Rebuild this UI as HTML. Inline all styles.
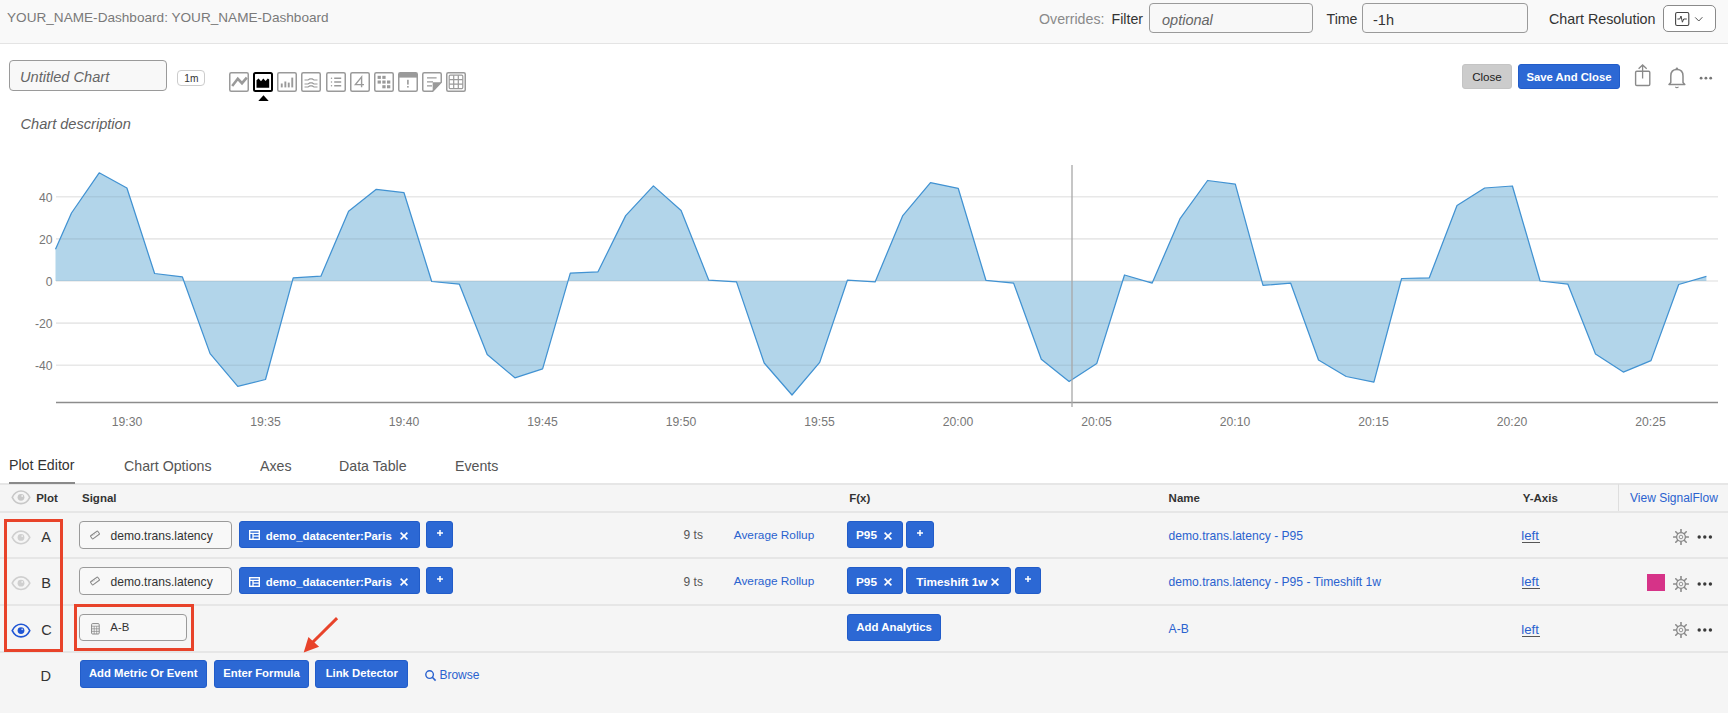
<!DOCTYPE html>
<html><head><meta charset="utf-8">
<style>
*{box-sizing:border-box;margin:0;padding:0}
html,body{width:1728px;height:713px;overflow:hidden;background:#fff;font-family:"Liberation Sans",sans-serif;color:#333;position:relative}
.abs{position:absolute}
.hdr{left:0;top:0;width:1728px;height:44px;background:#f9f9f9;border-bottom:1px solid #e4e4e4}
.t{position:absolute;white-space:nowrap;line-height:1}
.inp{position:absolute;border:1px solid #9a9a9a;border-radius:4px;background:#f8f8f8}
.btn{position:absolute;background:#2c68d4;color:#fff;font-weight:700;border-radius:3px;text-align:center;white-space:nowrap;border:1px solid #215cc9}
.tbl{left:0;top:484px;width:1728px;height:229px;background:#f5f5f5}
.sep{position:absolute;left:0;width:1728px;height:2px;background:#e6e6e6}
.link{color:#2a62cf}
svg text{font-family:"Liberation Sans",sans-serif}
</style></head><body>
<div class="abs hdr"></div>
<div class="t" style="left:7px;top:11px;font-size:13.6px;color:#7a7a7a">YOUR_NAME-Dashboard: YOUR_NAME-Dashboard</div>
<div class="t" style="left:1039px;top:12px;font-size:14.2px;color:#8a8a8a">Overrides:</div>
<div class="t" style="left:1111.5px;top:12px;font-size:14.2px;color:#333">Filter</div>
<div class="inp" style="left:1149px;top:3px;width:164px;height:30px;background:#f8f8f8"></div>
<div class="t" style="left:1162px;top:13px;font-size:14.5px;font-style:italic;color:#666">optional</div>
<div class="t" style="left:1326.5px;top:12px;font-size:14.2px;color:#333">Time</div>
<div class="inp" style="left:1362px;top:3px;width:166px;height:30px"></div>
<div class="t" style="left:1373px;top:13px;font-size:14.5px;color:#333">-1h</div>
<div class="t" style="left:1549px;top:12px;font-size:14.3px;color:#333">Chart Resolution</div>
<div class="inp" style="left:1663px;top:5px;width:53px;height:27px;background:#fff;border-radius:5px;border-color:#8a8a8a"></div>

<div class="inp" style="left:9px;top:60px;width:158px;height:31px"></div>
<div class="t" style="left:20px;top:70px;font-size:14.6px;font-style:italic;color:#666">Untitled Chart</div>
<div class="inp" style="left:177px;top:70px;width:28px;height:16px;border-color:#ccc;background:#fff"></div>
<div class="t" style="left:184.3px;top:74.2px;font-size:10.2px;color:#333">1m</div>

<svg class="abs" style="left:229.2px;top:72.2px" width="20" height="20" viewBox="0 0 20 20"><rect x="0.75" y="0.75" width="18.5" height="18.5" rx="1.5" fill="none" stroke="#9a9a9a" stroke-width="1.5"/><path d="M3.2,14 L8.8,6.8 L13,11.2 L17.8,5.6" fill="none" stroke="#9a9a9a" stroke-width="2.6"/></svg>
<svg class="abs" style="left:253.3px;top:72.2px" width="20" height="20" viewBox="0 0 20 20"><rect x="1" y="1" width="18" height="18" rx="1.5" fill="none" stroke="#000" stroke-width="2"/><path d="M3.5,15.7 V8.2 L5.6,6.6 L8,9.2 L10.3,6.6 L12.6,9 L14.8,6.6 L16.2,7.6 V15.7 Z" fill="#000"/></svg>
<svg class="abs" style="left:277.4px;top:72.2px" width="20" height="20" viewBox="0 0 20 20"><rect x="0.75" y="0.75" width="18.5" height="18.5" rx="1.5" fill="none" stroke="#9a9a9a" stroke-width="1.5"/><rect x="3.8" y="11.5" width="1.9" height="3.9000000000000004" fill="#9a9a9a"/><rect x="7.4" y="9.5" width="1.9" height="5.9" fill="#9a9a9a"/><rect x="10.8" y="10.6" width="1.9" height="4.800000000000001" fill="#9a9a9a"/><rect x="14.3" y="5.6" width="1.9" height="9.8" fill="#9a9a9a"/></svg>
<svg class="abs" style="left:301.4px;top:72.2px" width="20" height="20" viewBox="0 0 20 20"><rect x="0.75" y="0.75" width="18.5" height="18.5" rx="1.5" fill="none" stroke="#9a9a9a" stroke-width="1.5"/><g fill="none" stroke="#9a9a9a" stroke-width="1.2"><path d="M3.5,8 H7 L8.8,6.9 H11.2 L13,8 H16.5"/><path d="M3.5,12 H7 L8.8,10.9 H11.2 L13,12 H16.5"/><path d="M3.5,15 H7 L8.8,13.9 H11.2 L13,15 H16.5"/></g></svg>
<svg class="abs" style="left:325.5px;top:72.2px" width="20" height="20" viewBox="0 0 20 20"><rect x="0.75" y="0.75" width="18.5" height="18.5" rx="1.5" fill="none" stroke="#9a9a9a" stroke-width="1.5"/><g fill="#9a9a9a"><circle cx="5.5" cy="6.3" r="0.75"/><circle cx="5.5" cy="10" r="0.75"/><circle cx="5.5" cy="13.8" r="0.75"/></g><g stroke="#9a9a9a" stroke-width="1.4"><path d="M8.2,6.3 H15.2 M8.2,10 H15.2 M8.2,13.8 H15.2"/></g></svg>
<svg class="abs" style="left:349.6px;top:72.2px" width="20" height="20" viewBox="0 0 20 20"><rect x="0.75" y="0.75" width="18.5" height="18.5" rx="1.5" fill="none" stroke="#9a9a9a" stroke-width="1.5"/><path d="M11.6,15.3 V4.9 L5.4,12.6 H14" fill="none" stroke="#9a9a9a" stroke-width="1.4"/></svg>
<svg class="abs" style="left:373.7px;top:72.2px" width="20" height="20" viewBox="0 0 20 20"><rect x="0.75" y="0.75" width="18.5" height="18.5" rx="1.5" fill="none" stroke="#9a9a9a" stroke-width="1.5"/><rect x="3.6" y="3.8" width="3.3" height="3.1" fill="#9a9a9a"/><rect x="8.3" y="3.8" width="3.3" height="3.1" fill="#9a9a9a"/><rect x="3.6" y="8.5" width="3.3" height="3.1" fill="#9a9a9a"/><rect x="8.3" y="8.5" width="3.3" height="3.1" fill="#9a9a9a"/><rect x="13" y="8.5" width="3.3" height="3.1" fill="#9a9a9a"/><rect x="8.3" y="13.2" width="3.3" height="3.1" fill="#9a9a9a"/><rect x="13" y="13.2" width="3.3" height="3.1" fill="#9a9a9a"/></svg>
<svg class="abs" style="left:397.8px;top:72.2px" width="20" height="20" viewBox="0 0 20 20"><rect x="0.75" y="0.75" width="18.5" height="18.5" rx="1.5" fill="none" stroke="#9a9a9a" stroke-width="1.5"/><rect x="1" y="1" width="18" height="4.6" fill="#9a9a9a"/><rect x="9.1" y="7.8" width="1.6" height="4.8" fill="#9a9a9a"/><rect x="9.1" y="14" width="1.6" height="1.6" fill="#9a9a9a"/></svg>
<svg class="abs" style="left:421.8px;top:72.2px" width="20" height="20" viewBox="0 0 20 20"><path d="M0.75,2.25 Q0.75,0.75 2.25,0.75 H17.75 Q19.25,0.75 19.25,2.25 V10.2 L10.7,19.25 H2.25 Q0.75,19.25 0.75,17.75 Z" fill="none" stroke="#9a9a9a" stroke-width="1.5"/><path d="M10.7,10.2 H19.25 L10.7,19.25 Z" fill="#9a9a9a"/><path d="M5,5.9 H14.6 M5,9.9 H11 M5,13.9 H10" stroke="#9a9a9a" stroke-width="1.3"/></svg>
<svg class="abs" style="left:445.9px;top:72.2px" width="20" height="20" viewBox="0 0 20 20"><rect x="0.75" y="0.75" width="18.5" height="18.5" rx="1.5" fill="none" stroke="#9a9a9a" stroke-width="1.5"/><rect x="3.2" y="3.2" width="13.6" height="13.4" rx="1" fill="none" stroke="#9a9a9a" stroke-width="1.2"/><path d="M7.7,3.2 V16.6 M12.3,3.2 V16.6 M3.2,7.7 H16.8 M3.2,12.1 H16.8" stroke="#9a9a9a" stroke-width="1.2"/></svg>
<svg class="abs" style="left:258px;top:95px" width="11" height="6" viewBox="0 0 11 6"><path d="M0.3,6 L5.5,0.3 L10.7,6 Z" fill="#000"/></svg>
<div class="btn" style="left:1462px;top:64px;width:50px;height:25px;background:#cccccc;border-color:#c4c4c4;font-weight:400;font-size:11.6px;line-height:23px;color:#222">Close</div>
<div class="btn" style="left:1518px;top:64px;width:102px;height:25px;font-size:11.3px;line-height:25px">Save And Close</div>


<svg class="abs" style="left:1630px;top:60px" width="95" height="32" viewBox="1630 60 95 32">
<rect x="1635.6" y="71.3" width="14.2" height="14.2" rx="1.2" fill="none" stroke="#8a8a8a" stroke-width="1.4"/>
<path d="M1642.6,78.6 V65.2 M1638.6,68.8 L1642.6,65 L1646.7,68.8" fill="none" stroke="#8a8a8a" stroke-width="1.3"/>
<path d="M1669,84.4 L1670.8,82.5 V76 Q1670.8,69.6 1676.9,69.6 Q1683,69.6 1683,76 V82.5 L1684.8,84.4 Z" fill="none" stroke="#8a8a8a" stroke-width="1.5" stroke-linejoin="round"/>
<circle cx="1676.9" cy="68.6" r="1.2" fill="#8a8a8a"/>
<path d="M1675.3,86.8 Q1676.9,88.4 1678.5,86.8" fill="none" stroke="#8a8a8a" stroke-width="1.1"/>
<circle cx="1701.1" cy="78.2" r="1.4" fill="#777"/><circle cx="1705.9" cy="78.2" r="1.4" fill="#777"/><circle cx="1710.7" cy="78.2" r="1.4" fill="#777"/>
</svg>
<svg class="abs" style="left:1670px;top:8px" width="40" height="22" viewBox="1670 8 40 22">
<rect x="1675.6" y="12.5" width="13.2" height="13" rx="1.5" fill="none" stroke="#444" stroke-width="1.1"/>
<path d="M1677.4,19 H1679.8 L1681,16 L1682.4,22.2 L1683.7,19 H1686.8" fill="none" stroke="#444" stroke-width="1"/>
<path d="M1695.2,17.4 L1698.8,21 L1702.4,17.2" fill="none" stroke="#555" stroke-width="1"/>
</svg>
<div class="t" style="left:20.5px;top:117px;font-size:14.6px;font-style:italic;color:#606060">Chart description</div>

<svg class="abs" style="left:0;top:0" width="1728" height="440">
<g stroke="#e8e8e8" stroke-width="1.6"><line x1="56" y1="196.8" x2="1718" y2="196.8"/><line x1="56" y1="238.9" x2="1718" y2="238.9"/><line x1="56" y1="281" x2="1718" y2="281"/><line x1="56" y1="323.1" x2="1718" y2="323.1"/><line x1="56" y1="365.2" x2="1718" y2="365.2"/></g>
<path d="M55.5,249.2 L71.5,213.0 L99.2,172.8 L126.9,188.0 L154.6,273.5 L182.3,276.8 L210.1,353.6 L237.8,386.3 L265.5,379.5 L293.2,277.8 L320.9,276.2 L348.6,211.2 L376.3,189.3 L404.0,192.7 L431.7,281.5 L459.4,284.2 L487.2,354.6 L514.9,377.8 L542.6,368.8 L570.3,273.1 L598.0,271.8 L625.7,215.6 L653.4,185.9 L681.1,210.5 L708.8,280.2 L736.5,281.9 L764.2,363.0 L792.0,395.0 L819.7,362.4 L847.4,280.2 L875.1,281.9 L902.8,215.6 L930.5,182.6 L958.2,188.3 L985.9,280.3 L1013.6,283.1 L1041.3,359.2 L1069.1,381.6 L1096.8,363.4 L1124.5,275.0 L1152.2,283.1 L1179.9,218.9 L1207.6,180.5 L1235.3,184.2 L1263.0,285.3 L1290.7,283.2 L1318.5,360.0 L1346.2,376.5 L1373.9,382.2 L1401.6,278.5 L1429.3,277.8 L1457.0,205.5 L1484.7,188.0 L1512.4,186.0 L1540.1,281.0 L1567.8,284.1 L1595.5,353.9 L1623.3,372.1 L1651.0,360.6 L1678.7,284.5 L1706.4,276.4 L1706.4,281 L55.5,281 Z" fill="#b2d5ea"/>
<clipPath id="ac"><path d="M55.5,249.2 L71.5,213.0 L99.2,172.8 L126.9,188.0 L154.6,273.5 L182.3,276.8 L210.1,353.6 L237.8,386.3 L265.5,379.5 L293.2,277.8 L320.9,276.2 L348.6,211.2 L376.3,189.3 L404.0,192.7 L431.7,281.5 L459.4,284.2 L487.2,354.6 L514.9,377.8 L542.6,368.8 L570.3,273.1 L598.0,271.8 L625.7,215.6 L653.4,185.9 L681.1,210.5 L708.8,280.2 L736.5,281.9 L764.2,363.0 L792.0,395.0 L819.7,362.4 L847.4,280.2 L875.1,281.9 L902.8,215.6 L930.5,182.6 L958.2,188.3 L985.9,280.3 L1013.6,283.1 L1041.3,359.2 L1069.1,381.6 L1096.8,363.4 L1124.5,275.0 L1152.2,283.1 L1179.9,218.9 L1207.6,180.5 L1235.3,184.2 L1263.0,285.3 L1290.7,283.2 L1318.5,360.0 L1346.2,376.5 L1373.9,382.2 L1401.6,278.5 L1429.3,277.8 L1457.0,205.5 L1484.7,188.0 L1512.4,186.0 L1540.1,281.0 L1567.8,284.1 L1595.5,353.9 L1623.3,372.1 L1651.0,360.6 L1678.7,284.5 L1706.4,276.4 L1706.4,281 L55.5,281 Z"/></clipPath><g stroke="#000" stroke-opacity="0.06" stroke-width="1.6" clip-path="url(#ac)"><line x1="56" y1="196.8" x2="1718" y2="196.8"/><line x1="56" y1="238.9" x2="1718" y2="238.9"/><line x1="56" y1="281" x2="1718" y2="281"/><line x1="56" y1="323.1" x2="1718" y2="323.1"/><line x1="56" y1="365.2" x2="1718" y2="365.2"/></g>
<path d="M55.5,249.2 L71.5,213.0 L99.2,172.8 L126.9,188.0 L154.6,273.5 L182.3,276.8 L210.1,353.6 L237.8,386.3 L265.5,379.5 L293.2,277.8 L320.9,276.2 L348.6,211.2 L376.3,189.3 L404.0,192.7 L431.7,281.5 L459.4,284.2 L487.2,354.6 L514.9,377.8 L542.6,368.8 L570.3,273.1 L598.0,271.8 L625.7,215.6 L653.4,185.9 L681.1,210.5 L708.8,280.2 L736.5,281.9 L764.2,363.0 L792.0,395.0 L819.7,362.4 L847.4,280.2 L875.1,281.9 L902.8,215.6 L930.5,182.6 L958.2,188.3 L985.9,280.3 L1013.6,283.1 L1041.3,359.2 L1069.1,381.6 L1096.8,363.4 L1124.5,275.0 L1152.2,283.1 L1179.9,218.9 L1207.6,180.5 L1235.3,184.2 L1263.0,285.3 L1290.7,283.2 L1318.5,360.0 L1346.2,376.5 L1373.9,382.2 L1401.6,278.5 L1429.3,277.8 L1457.0,205.5 L1484.7,188.0 L1512.4,186.0 L1540.1,281.0 L1567.8,284.1 L1595.5,353.9 L1623.3,372.1 L1651.0,360.6 L1678.7,284.5 L1706.4,276.4" fill="none" stroke="#4192d2" stroke-width="1.25" stroke-linejoin="round"/>
<line x1="56" y1="402.5" x2="1718" y2="402.5" stroke="#8c8c8c" stroke-width="1.3"/>
<line x1="1072" y1="165" x2="1072" y2="407" stroke="#a8a8a8" stroke-width="1.3"/>
<g fill="#777" font-size="12.2"><text x="52.5" y="202" text-anchor="end">40</text><text x="52.5" y="244" text-anchor="end">20</text><text x="52.5" y="286" text-anchor="end">0</text><text x="52.5" y="328" text-anchor="end">-20</text><text x="52.5" y="370" text-anchor="end">-40</text><text x="127" y="426" text-anchor="middle">19:30</text><text x="265.5" y="426" text-anchor="middle">19:35</text><text x="404" y="426" text-anchor="middle">19:40</text><text x="542.5" y="426" text-anchor="middle">19:45</text><text x="681" y="426" text-anchor="middle">19:50</text><text x="819.5" y="426" text-anchor="middle">19:55</text><text x="958" y="426" text-anchor="middle">20:00</text><text x="1096.5" y="426" text-anchor="middle">20:05</text><text x="1235" y="426" text-anchor="middle">20:10</text><text x="1373.5" y="426" text-anchor="middle">20:15</text><text x="1512" y="426" text-anchor="middle">20:20</text><text x="1650.5" y="426" text-anchor="middle">20:25</text></g>
</svg>

<div class="t" style="left:9px;top:458px;font-size:14.2px;color:#333">Plot Editor</div>
<div class="abs" style="left:9px;top:481.8px;width:66px;height:2px;background:#8a8a8a;z-index:2"></div>
<div class="t" style="left:124px;top:459px;font-size:14.2px;color:#555">Chart Options</div>
<div class="t" style="left:260px;top:459px;font-size:14.2px;color:#555">Axes</div>
<div class="t" style="left:339px;top:459px;font-size:14.2px;color:#555">Data Table</div>
<div class="t" style="left:455px;top:459px;font-size:14.2px;color:#555">Events</div>

<div class="abs tbl"></div>
<div class="sep" style="top:483px;height:2px;background:#e6e6e6"></div>
<div class="sep" style="top:511px"></div>
<div class="sep" style="top:557px"></div>
<div class="sep" style="top:604px"></div>
<div class="sep" style="top:651px"></div>

<!--TABLE--><svg class="abs" style="left:11px;top:489px" width="20" height="16" viewBox="0 0 20 16"><g transform="translate(10.00,8.30)"><path d="M-8.8,0 C-4.6,-8.4 4.6,-8.4 8.8,0 C4.6,8.4 -4.6,8.4 -8.8,0 Z" fill="none" stroke="#c8c8c8" stroke-width="1.6" stroke-linejoin="round"/><circle cx="0" cy="0" r="3.4" fill="#c8c8c8"/><circle cx="1.2" cy="-1.3" r="0.9" fill="#fff" fill-opacity="0.7"/></g></svg>
<div class="t" style="left:36.2px;top:492.7px;font-size:11.5px;color:#333;font-weight:700;">Plot</div>
<div class="t" style="left:82px;top:492.7px;font-size:11.5px;color:#333;font-weight:700;">Signal</div>
<div class="t" style="left:849.2px;top:492.7px;font-size:11.5px;color:#333;font-weight:700;">F(x)</div>
<div class="t" style="left:1168.6px;top:492.7px;font-size:11.5px;color:#333;font-weight:700;">Name</div>
<div class="t" style="left:1522.7px;top:492.7px;font-size:11.5px;color:#333;font-weight:700;">Y-Axis</div>
<div class="abs" style="left:1617.5px;top:484px;width:1px;height:27px;background:#dedede"></div>
<div class="t" style="left:1630px;top:492.2px;font-size:12px;color:#2a62cf;font-weight:400;">View SignalFlow</div>
<svg class="abs" style="left:11px;top:529px" width="20" height="16" viewBox="0 0 20 16"><g transform="translate(10.00,8.40)"><path d="M-8.8,0 C-4.6,-8.4 4.6,-8.4 8.8,0 C4.6,8.4 -4.6,8.4 -8.8,0 Z" fill="none" stroke="#cfcfcf" stroke-width="1.6" stroke-linejoin="round"/><circle cx="0" cy="0" r="3.4" fill="#cfcfcf"/><circle cx="1.2" cy="-1.3" r="0.9" fill="#fff" fill-opacity="0.7"/></g></svg>
<div class="t" style="left:41.2px;top:529.8px;font-size:14.6px;color:#333;font-weight:400;">A</div>
<div class="inp" style="left:79.3px;top:520.5px;width:153.2px;height:28px"></div>
<svg class="abs" style="left:89.2px;top:528.5px" width="12" height="12" viewBox="-6 -6 12 12"><g transform="rotate(-36)"><rect x="-4.4" y="-1.9" width="8.8" height="3.8" rx="0.5" fill="none" stroke="#8a8a8a" stroke-width="1.1"/><path d="M-2,-1.9 V-0.6 M0,-1.9 V-0.6 M2,-1.9 V-0.6" stroke="#8a8a8a" stroke-width="0.6"/></g></svg>
<div class="t" style="left:110.5px;top:529.8px;font-size:12.1px;color:#333;font-weight:400;">demo.trans.latency</div>
<div class="btn" style="left:239px;top:521.0px;width:181px;height:27px"></div><div class="t" style="left:265.8px;top:530.5px;font-size:11.4px;color:#fff;font-weight:700;">demo_datacenter:Paris</div>
<svg class="abs" style="left:248.7px;top:530.3px" width="11" height="10" viewBox="0 0 11 10"><rect x="0.7" y="0.7" width="9.6" height="8.6" fill="none" stroke="#fff" stroke-width="1.4"/><path d="M0.7,3.3 H10.3 M4,3.3 V9.3 M4,6.2 H10.3" stroke="#fff" stroke-width="1.3"/></svg>
<svg class="abs" style="left:400.2px;top:531.7px" width="8" height="8" viewBox="0 0 8 8"><path d="M0.6,0.6 L7.4,7.4 M7.4,0.6 L0.6,7.4" stroke="#fff" stroke-width="1.6"/></svg>
<div class="btn" style="left:426px;top:521.0px;width:27px;height:27px"></div><svg class="abs" style="left:435.5px;top:529.0px" width="8" height="8" viewBox="0 0 8 8"><path d="M4,1 V7 M1,4 H7" stroke="#fff" stroke-width="1.5"/></svg>
<div class="t" style="left:683.6px;top:529.3px;font-size:12px;color:#555;font-weight:400;">9 ts</div>
<div class="t" style="left:733.8px;top:529.5px;font-size:11.8px;color:#2a62cf;font-weight:400;">Average Rollup</div>
<div class="btn" style="left:847px;top:521.0px;width:56px;height:27px"></div><div class="t" style="left:856px;top:530.2px;font-size:11.8px;color:#fff;font-weight:700;">P95</div>
<svg class="abs" style="left:883.5px;top:531.7px" width="8" height="8" viewBox="0 0 8 8"><path d="M0.6,0.6 L7.4,7.4 M7.4,0.6 L0.6,7.4" stroke="#fff" stroke-width="1.6"/></svg>
<div class="btn" style="left:906.4px;top:521.0px;width:27.5px;height:27px"></div><svg class="abs" style="left:916.15px;top:529.0px" width="8" height="8" viewBox="0 0 8 8"><path d="M4,1 V7 M1,4 H7" stroke="#fff" stroke-width="1.5"/></svg>
<div class="t" style="left:1168.6px;top:529.8px;font-size:12.1px;color:#2a62cf;font-weight:400;">demo.trans.latency - P95</div>
<div class="t" style="left:1521.3px;top:528.9px;font-size:13.2px;color:#2a62cf;font-weight:400;">left</div>
<div class="abs" style="left:1521.5px;top:541.9px;width:18.5px;height:1.2px;background:#555"></div>
<svg class="abs" style="left:1672.5px;top:528.6px" width="16" height="16" viewBox="-8 -8 16 16"><g stroke="#8a8a8a" stroke-width="1.6" stroke-linecap="round"><line x1="0" y1="-4.6" x2="0" y2="-7.4" transform="rotate(0)"/><line x1="0" y1="-4.6" x2="0" y2="-7.4" transform="rotate(45)"/><line x1="0" y1="-4.6" x2="0" y2="-7.4" transform="rotate(90)"/><line x1="0" y1="-4.6" x2="0" y2="-7.4" transform="rotate(135)"/><line x1="0" y1="-4.6" x2="0" y2="-7.4" transform="rotate(180)"/><line x1="0" y1="-4.6" x2="0" y2="-7.4" transform="rotate(225)"/><line x1="0" y1="-4.6" x2="0" y2="-7.4" transform="rotate(270)"/><line x1="0" y1="-4.6" x2="0" y2="-7.4" transform="rotate(315)"/></g><circle r="4.4" fill="#f5f5f5" stroke="#8a8a8a" stroke-width="1.3"/><circle r="1.8" fill="none" stroke="#8a8a8a" stroke-width="0.9"/></svg>
<svg class="abs" style="left:1697.3px;top:533.6px" width="16" height="6" viewBox="0 0 16 6"><circle cx="2.2" cy="3" r="1.7" fill="#3a3a3a"/><circle cx="7.8" cy="3" r="1.7" fill="#3a3a3a"/><circle cx="13.4" cy="3" r="1.7" fill="#3a3a3a"/></svg>
<svg class="abs" style="left:11px;top:575px" width="20" height="16" viewBox="0 0 20 16"><g transform="translate(10.00,8.20)"><path d="M-8.8,0 C-4.6,-8.4 4.6,-8.4 8.8,0 C4.6,8.4 -4.6,8.4 -8.8,0 Z" fill="none" stroke="#cfcfcf" stroke-width="1.6" stroke-linejoin="round"/><circle cx="0" cy="0" r="3.4" fill="#cfcfcf"/><circle cx="1.2" cy="-1.3" r="0.9" fill="#fff" fill-opacity="0.7"/></g></svg>
<div class="t" style="left:41.2px;top:575.6px;font-size:14.6px;color:#333;font-weight:400;">B</div>
<div class="inp" style="left:79.3px;top:566.8px;width:153.2px;height:28px"></div>
<svg class="abs" style="left:89.2px;top:574.8px" width="12" height="12" viewBox="-6 -6 12 12"><g transform="rotate(-36)"><rect x="-4.4" y="-1.9" width="8.8" height="3.8" rx="0.5" fill="none" stroke="#8a8a8a" stroke-width="1.1"/><path d="M-2,-1.9 V-0.6 M0,-1.9 V-0.6 M2,-1.9 V-0.6" stroke="#8a8a8a" stroke-width="0.6"/></g></svg>
<div class="t" style="left:110.5px;top:576.1px;font-size:12.1px;color:#333;font-weight:400;">demo.trans.latency</div>
<div class="btn" style="left:239px;top:567.3px;width:181px;height:27px"></div><div class="t" style="left:265.8px;top:576.8px;font-size:11.4px;color:#fff;font-weight:700;">demo_datacenter:Paris</div>
<svg class="abs" style="left:248.7px;top:576.5999999999999px" width="11" height="10" viewBox="0 0 11 10"><rect x="0.7" y="0.7" width="9.6" height="8.6" fill="none" stroke="#fff" stroke-width="1.4"/><path d="M0.7,3.3 H10.3 M4,3.3 V9.3 M4,6.2 H10.3" stroke="#fff" stroke-width="1.3"/></svg>
<svg class="abs" style="left:400.2px;top:578.0px" width="8" height="8" viewBox="0 0 8 8"><path d="M0.6,0.6 L7.4,7.4 M7.4,0.6 L0.6,7.4" stroke="#fff" stroke-width="1.6"/></svg>
<div class="btn" style="left:426px;top:567.3px;width:27px;height:27px"></div><svg class="abs" style="left:435.5px;top:575.3px" width="8" height="8" viewBox="0 0 8 8"><path d="M4,1 V7 M1,4 H7" stroke="#fff" stroke-width="1.5"/></svg>
<div class="t" style="left:683.6px;top:575.6px;font-size:12px;color:#555;font-weight:400;">9 ts</div>
<div class="t" style="left:733.8px;top:575.8px;font-size:11.8px;color:#2a62cf;font-weight:400;">Average Rollup</div>
<div class="btn" style="left:847px;top:567.3px;width:56px;height:27px"></div><div class="t" style="left:856px;top:576.5px;font-size:11.8px;color:#fff;font-weight:700;">P95</div>
<svg class="abs" style="left:883.5px;top:578.0px" width="8" height="8" viewBox="0 0 8 8"><path d="M0.6,0.6 L7.4,7.4 M7.4,0.6 L0.6,7.4" stroke="#fff" stroke-width="1.6"/></svg>
<div class="btn" style="left:906.4px;top:567.3px;width:104.5px;height:27px"></div><div class="t" style="left:916.3px;top:576.5px;font-size:11.8px;color:#fff;font-weight:700;">Timeshift 1w</div>
<svg class="abs" style="left:991.2px;top:578.0px" width="8" height="8" viewBox="0 0 8 8"><path d="M0.6,0.6 L7.4,7.4 M7.4,0.6 L0.6,7.4" stroke="#fff" stroke-width="1.6"/></svg>
<div class="btn" style="left:1014.8px;top:567.3px;width:26.2px;height:27px"></div><svg class="abs" style="left:1023.8999999999999px;top:575.3px" width="8" height="8" viewBox="0 0 8 8"><path d="M4,1 V7 M1,4 H7" stroke="#fff" stroke-width="1.5"/></svg>
<div class="t" style="left:1168.6px;top:576.1px;font-size:12.1px;color:#2a62cf;font-weight:400;">demo.trans.latency - P95 - Timeshift 1w</div>
<div class="abs" style="left:1647px;top:574px;width:18px;height:17px;background:#d63388"></div>
<div class="t" style="left:1521.3px;top:574.9px;font-size:13.2px;color:#2a62cf;font-weight:400;">left</div>
<div class="abs" style="left:1521.5px;top:587.9px;width:18.5px;height:1.2px;background:#555"></div>
<svg class="abs" style="left:1672.5px;top:576px" width="16" height="16" viewBox="-8 -8 16 16"><g stroke="#8a8a8a" stroke-width="1.6" stroke-linecap="round"><line x1="0" y1="-4.6" x2="0" y2="-7.4" transform="rotate(0)"/><line x1="0" y1="-4.6" x2="0" y2="-7.4" transform="rotate(45)"/><line x1="0" y1="-4.6" x2="0" y2="-7.4" transform="rotate(90)"/><line x1="0" y1="-4.6" x2="0" y2="-7.4" transform="rotate(135)"/><line x1="0" y1="-4.6" x2="0" y2="-7.4" transform="rotate(180)"/><line x1="0" y1="-4.6" x2="0" y2="-7.4" transform="rotate(225)"/><line x1="0" y1="-4.6" x2="0" y2="-7.4" transform="rotate(270)"/><line x1="0" y1="-4.6" x2="0" y2="-7.4" transform="rotate(315)"/></g><circle r="4.4" fill="#f5f5f5" stroke="#8a8a8a" stroke-width="1.3"/><circle r="1.8" fill="none" stroke="#8a8a8a" stroke-width="0.9"/></svg>
<svg class="abs" style="left:1697.3px;top:581px" width="16" height="6" viewBox="0 0 16 6"><circle cx="2.2" cy="3" r="1.7" fill="#3a3a3a"/><circle cx="7.8" cy="3" r="1.7" fill="#3a3a3a"/><circle cx="13.4" cy="3" r="1.7" fill="#3a3a3a"/></svg>
<svg class="abs" style="left:11px;top:622px" width="20" height="16" viewBox="0 0 20 16"><g transform="translate(10.00,8.60)"><path d="M-8.8,0 C-4.6,-8.4 4.6,-8.4 8.8,0 C4.6,8.4 -4.6,8.4 -8.8,0 Z" fill="none" stroke="#1f55d4" stroke-width="1.6" stroke-linejoin="round"/><circle cx="0" cy="0" r="3.4" fill="#1f55d4"/><circle cx="1.2" cy="-1.3" r="0.9" fill="#fff" fill-opacity="0.7"/></g></svg>
<div class="t" style="left:41.2px;top:622.8px;font-size:14.6px;color:#333;font-weight:400;">C</div>
<div class="inp" style="left:79.3px;top:614.2px;width:107.6px;height:27px"></div>
<svg class="abs" style="left:91px;top:623px" width="9" height="12" viewBox="0 0 9 12"><rect x="0.6" y="0.6" width="7.6" height="10.4" rx="1" fill="none" stroke="#888" stroke-width="1"/><path d="M0.6,3.2 H8.2 M0.6,5.8 H8.2 M0.6,8.4 H8.2 M3.2,3.2 V11 M5.7,3.2 V11" stroke="#888" stroke-width="0.7"/></svg>
<div class="t" style="left:110.3px;top:621.9px;font-size:11.4px;color:#333;font-weight:400;">A-B</div>
<div class="btn" style="left:847.2px;top:614.4px;width:93.8px;height:27px;font-size:11.4px;line-height:25px">Add Analytics</div>
<div class="t" style="left:1168.6px;top:622.8px;font-size:12.1px;color:#2a62cf;font-weight:400;">A-B</div>
<div class="t" style="left:1521.3px;top:622.6px;font-size:13.2px;color:#2a62cf;font-weight:400;">left</div>
<div class="abs" style="left:1521.5px;top:635.6px;width:18.5px;height:1.2px;background:#555"></div>
<svg class="abs" style="left:1672.5px;top:621.6px" width="16" height="16" viewBox="-8 -8 16 16"><g stroke="#8a8a8a" stroke-width="1.6" stroke-linecap="round"><line x1="0" y1="-4.6" x2="0" y2="-7.4" transform="rotate(0)"/><line x1="0" y1="-4.6" x2="0" y2="-7.4" transform="rotate(45)"/><line x1="0" y1="-4.6" x2="0" y2="-7.4" transform="rotate(90)"/><line x1="0" y1="-4.6" x2="0" y2="-7.4" transform="rotate(135)"/><line x1="0" y1="-4.6" x2="0" y2="-7.4" transform="rotate(180)"/><line x1="0" y1="-4.6" x2="0" y2="-7.4" transform="rotate(225)"/><line x1="0" y1="-4.6" x2="0" y2="-7.4" transform="rotate(270)"/><line x1="0" y1="-4.6" x2="0" y2="-7.4" transform="rotate(315)"/></g><circle r="4.4" fill="#f5f5f5" stroke="#8a8a8a" stroke-width="1.3"/><circle r="1.8" fill="none" stroke="#8a8a8a" stroke-width="0.9"/></svg>
<svg class="abs" style="left:1697.3px;top:626.6px" width="16" height="6" viewBox="0 0 16 6"><circle cx="2.2" cy="3" r="1.7" fill="#3a3a3a"/><circle cx="7.8" cy="3" r="1.7" fill="#3a3a3a"/><circle cx="13.4" cy="3" r="1.7" fill="#3a3a3a"/></svg>
<div class="t" style="left:40.5px;top:668.6px;font-size:14.6px;color:#333;font-weight:400;">D</div>
<div class="btn" style="left:79.6px;top:660.4px;width:127.3px;height:27.6px;font-size:11.3px;line-height:25px">Add Metric Or Event</div>
<div class="btn" style="left:214px;top:660.4px;width:95px;height:27.6px;font-size:11.3px;line-height:25px">Enter Formula</div>
<div class="btn" style="left:315.2px;top:660.4px;width:93.2px;height:27.6px;font-size:11.3px;line-height:25px">Link Detector</div>
<svg class="abs" style="left:423.5px;top:668.5px" width="14" height="14" viewBox="0 0 14 14"><circle cx="5.6" cy="5.6" r="3.8" fill="none" stroke="#2a62cf" stroke-width="1.4"/><path d="M8.3,8.3 L11.6,11.6" stroke="#2a62cf" stroke-width="1.6"/></svg>
<div class="t" style="left:439.4px;top:668.8px;font-size:12px;color:#2a62cf;font-weight:400;">Browse</div>
<div class="abs" style="left:4px;top:519px;width:59px;height:133px;border:3px solid #e8432a"></div>
<div class="abs" style="left:74px;top:603.5px;width:119.5px;height:47.5px;border:3px solid #e8432a"></div>
<svg class="abs" style="left:290px;top:610px" width="60" height="50" viewBox="290 610 60 50"><path d="M336,619.2 L313,642" stroke="#e8432a" stroke-width="3" stroke-linecap="square"/><path d="M303.7,652.4 L308.4,636.9 L319.1,646.8 Z" fill="#e8432a"/></svg><!--/TABLE-->
</body></html>
